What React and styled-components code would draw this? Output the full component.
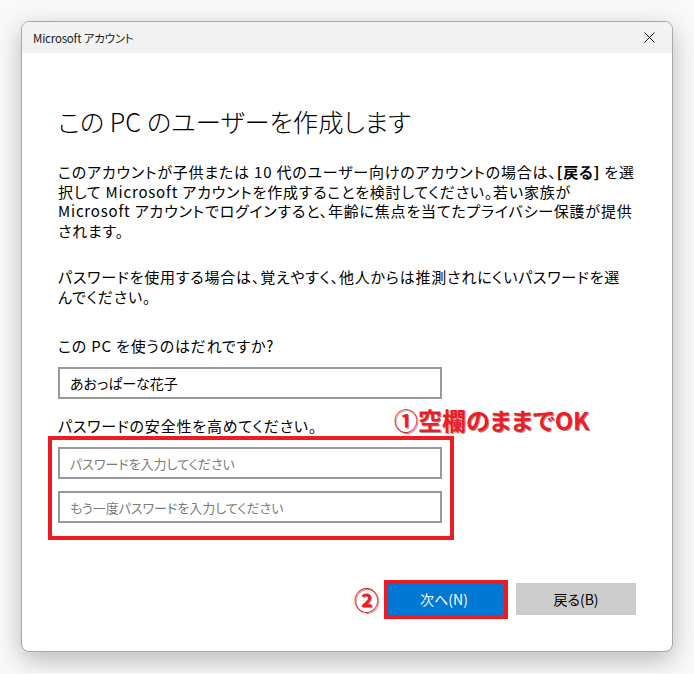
import React from 'react';
import styled, { createGlobalStyle } from 'styled-components';

const GlobalStyle = createGlobalStyle`
  html, body {
    margin: 0;
    padding: 0;
    background: #f9f9f9;
  }
  body {
    font-family: 'Noto Sans CJK JP', 'Noto Sans', sans-serif;
    font-feature-settings: 'palt';
    color: #000;
  }
`;

const Page = styled.div`
  padding: 21px;
  width: 652px;
`;

const Window = styled.div`
  width: 652px;
  height: 631px;
  box-sizing: border-box;
  background: #fff;
  border: 1px solid #a8a8a8;
  border-radius: 8px;
  box-shadow: 0 8px 26px rgba(0, 0, 0, 0.26);
  overflow: hidden;
  display: flex;
  flex-direction: column;
`;

const TitleBar = styled.div`
  height: 31px;
  background: #f2f2f2;
  display: flex;
  align-items: center;
  justify-content: space-between;
  padding: 0 17px 0 11px;
  font-size: 11.5px;
  letter-spacing: -0.2px;
  color: #1a1a1a;
`;

const CloseButton = styled.button`
  border: none;
  background: transparent;
  padding: 0;
  width: 12px;
  height: 12px;
  display: flex;
  align-items: center;
  justify-content: center;
`;

const Content = styled.div`
  padding: 51px 36px 0 36px;
  display: flex;
  flex-direction: column;
`;

const Heading = styled.h1`
  margin: 0;
  font-size: 25.3px;
  line-height: 34px;
  font-weight: 300;
  color: #000;
`;

const Paragraph = styled.p`
  margin: ${(p) => p.$top || 0}px 0 0;
  font-size: 15px;
  line-height: 19.5px;
  letter-spacing: 0.8px;
  white-space: nowrap;
  font-weight: 400;
`;

const Label = styled.div`
  margin-top: ${(p) => p.$top || 0}px;
  font-size: 15px;
  line-height: 20px;
  letter-spacing: 0.8px;
`;

const Field = styled.input`
  display: block;
  box-sizing: border-box;
  width: 384px;
  height: 32px;
  margin-top: ${(p) => p.$top || 0}px;
  padding: 0 10px;
  border: 2px solid #999;
  background: #fff;
  font-family: inherit;
  font-feature-settings: 'palt';
  font-size: 14px;
  color: #000;
  outline: none;
  &::placeholder {
    color: #7a7a7a;
    font-size: 13px;
  }
`;

const PasswordGroup = styled.div`
  position: relative;
`;

const Highlight = styled.div`
  position: absolute;
  border: 4px solid #ed1c24;
  pointer-events: none;
  left: ${(p) => p.$left}px;
  top: ${(p) => p.$top}px;
  width: ${(p) => p.$width}px;
  height: ${(p) => p.$height}px;
  box-sizing: border-box;
`;

const Note = styled.div`
  position: absolute;
  left: 336px;
  top: 6px;
  font-size: 24px;
  line-height: 30px;
  font-weight: 700;
  color: #ee1c25;
  white-space: nowrap;
  text-shadow: 1px 1px 0 rgba(80, 0, 0, 0.45);
`;

const ButtonRow = styled.div`
  position: relative;
  margin-top: 60px;
  display: flex;
  justify-content: flex-end;
  gap: 12px;
`;

const Button = styled.button`
  width: 120px;
  height: 32px;
  border: none;
  border-radius: 0;
  font-family: inherit;
  font-feature-settings: 'palt';
  font-size: 14px;
  background: ${(p) => (p.$primary ? '#0078d4' : '#cccccc')};
  color: ${(p) => (p.$primary ? '#fff' : '#000')};
`;

const StepMark = styled.div`
  position: absolute;
  left: 296px;
  top: 0px;
  font-size: 25px;
  line-height: 32px;
  font-weight: 700;
  color: #ee1c25;
  text-shadow: 1px 1px 0 rgba(80, 0, 0, 0.45);
`;

const CloseIcon = () => (
  <svg width="11" height="11" viewBox="0 0 11 11">
    <path d="M0.5 0.5 L10.5 10.5 M10.5 0.5 L0.5 10.5" stroke="#1a1a1a" strokeWidth="1" />
  </svg>
);

const App = () => (
  <>
    <GlobalStyle />
    <Page>
      <Window>
        <TitleBar>
          <span>Microsoft アカウント</span>
          <CloseButton aria-label="閉じる">
            <CloseIcon />
          </CloseButton>
        </TitleBar>
        <Content>
          <Heading>この PC のユーザーを作成します</Heading>
          <Paragraph $top={24}>
            このアカウントが子供または 10 代のユーザー向けのアカウントの場合は、<b>[戻る]</b> を選
            <br />
            択して Microsoft アカウントを作成することを検討してください。若い家族が
            <br />
            Microsoft アカウントでログインすると、年齢に焦点を当てたプライバシー保護が提供
            <br />
            されます。
          </Paragraph>
          <Paragraph $top={27}>
            パスワードを使用する場合は、覚えやすく、他人からは推測されにくいパスワードを選
            <br />
            んでください。
          </Paragraph>
          <Label $top={30}>この PC を使うのはだれですか?</Label>
          <Field $top={11} defaultValue="あおっぱーな花子" />
          <PasswordGroup>
            <Label $top={17}>パスワードの安全性を高めてください。</Label>
            <Field $top={11} type="password" placeholder="パスワードを入力してください" />
            <Field $top={12} type="password" placeholder="もう一度パスワードを入力してください" />
            <Highlight $left={-10} $top={37} $width={406} $height={104} />
            <Note>①空欄のままでOK</Note>
          </PasswordGroup>
          <ButtonRow>
            <StepMark>②</StepMark>
            <Button $primary>次へ(N)</Button>
            <Button>戻る(B)</Button>
            <Highlight $left={326} $top={-3} $width={124} $height={39} />
          </ButtonRow>
        </Content>
      </Window>
    </Page>
  </>
);

export default App;
